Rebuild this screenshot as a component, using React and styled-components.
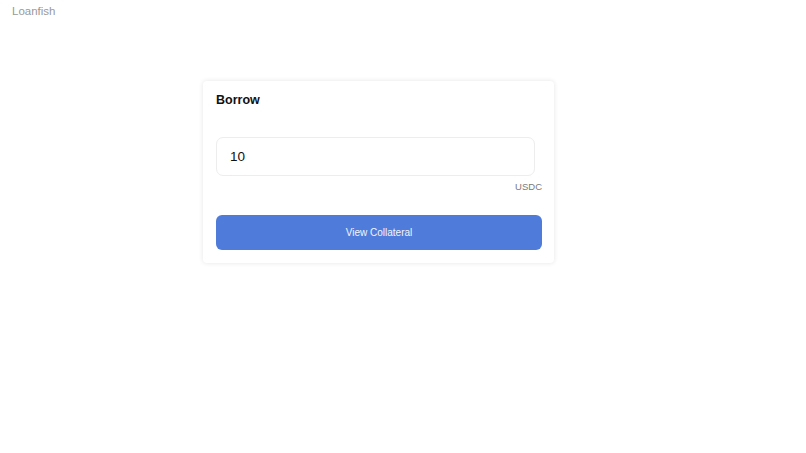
import React, { useState } from "react";
import styled, { createGlobalStyle } from "styled-components";

const GlobalStyle = createGlobalStyle`
  html, body {
    margin: 0;
    padding: 0;
    background: #fff;
    font-family: "Liberation Sans", Arial, sans-serif;
  }
`;

const Page = styled.div`
  width: 100vw;
  min-height: 100vh;
  display: flex;
  flex-direction: column;
`;

const Header = styled.header`
  height: 22px;
  padding: 4px 12px 0;
  display: flex;
  align-items: flex-start;
`;

const Brand = styled.span`
  font-size: 11.5px;
  line-height: 14px;
  color: #999;
`;

const Main = styled.main`
  padding: 55px 0 0 203px;
`;

const Card = styled.div`
  width: 351px;
  box-sizing: border-box;
  padding: 12px 12px 13px 13px;
  background: #fff;
  border-radius: 4px;
  box-shadow: 0 0 5px rgba(0, 0, 0, 0.11);
  display: flex;
  flex-direction: column;
`;

const Title = styled.h3`
  margin: 0;
  font-size: 12.5px;
  line-height: 15px;
  font-weight: 700;
  color: #111;
`;

const Field = styled.input`
  margin-top: 29px;
  width: calc(100% - 7px);
  height: 39px;
  box-sizing: border-box;
  border: 1px solid #ededed;
  border-radius: 7px;
  padding: 0 13px;
  font-family: inherit;
  font-size: 13.5px;
  color: #111;
  outline: none;
  background: #fff;
`;

const Unit = styled.div`
  margin-top: 5px;
  text-align: right;
  font-size: 9.5px;
  line-height: 12px;
  color: #7a7a7a;
`;

const Action = styled.button`
  margin-top: 22px;
  height: 35px;
  width: 100%;
  border: 0;
  border-radius: 6px;
  background: #4f7cdb;
  color: #f2f5fc;
  font-family: inherit;
  font-size: 10px;
  cursor: pointer;
`;

const App = () => {
  const [amount, setAmount] = useState("10");

  return (
    <Page>
      <GlobalStyle />
      <Header>
        <Brand>Loanfish</Brand>
      </Header>
      <Main>
        <Card>
          <Title>Borrow</Title>
          <Field value={amount} onChange={(e) => setAmount(e.target.value)} />
          <Unit>USDC</Unit>
          <Action>View Collateral</Action>
        </Card>
      </Main>
    </Page>
  );
};

export default App;
